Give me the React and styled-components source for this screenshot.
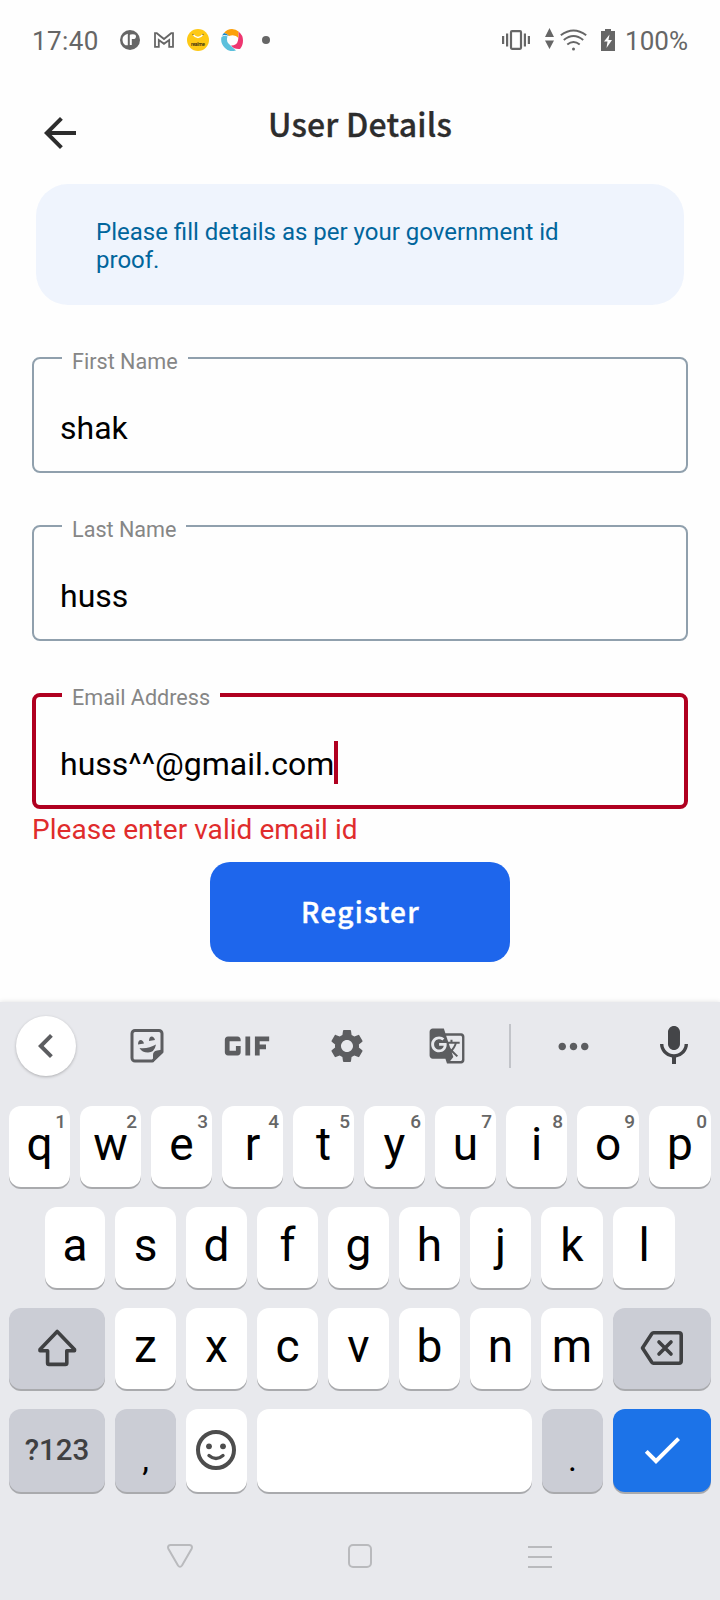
import React from 'react';
import styled, { createGlobalStyle } from 'styled-components';
import {
  MdArrowBack,
  MdCheck,
  MdChevronLeft,
  MdGif,
  MdGTranslate,
  MdMic,
  MdMoreHoriz,
  MdSettings,
} from 'react-icons/md';

const GlobalStyle = createGlobalStyle`
  *, *::before, *::after { box-sizing: border-box; }
  body { margin: 0; background: #fefefe; font-family: Roboto, 'Liberation Sans', sans-serif; }
  svg { display: block; flex: none; }
`;

const Screen = styled.div`
  display: flex;
  flex-direction: column;
  width: 720px;
  height: 1600px;
  overflow: hidden;
  background: #fefefe;
`;

/* ---------- status bar ---------- */

const StatusBar = styled.header`
  display: flex;
  flex: none;
  justify-content: space-between;
  height: 80px;
  padding: 0 32px;
  color: #666;
`;

const StatusGroup = styled.div`
  display: flex;
  align-items: center;
`;

const StatusText = styled.span`
  padding-top: 2px;
  margin-left: ${(p) => p.$gap || 0}px;
  font-size: 26px;
  line-height: 30px;
  letter-spacing: ${(p) => p.$spacing || 0}px;
`;

const StatusIcon = styled.svg`
  margin-left: ${(p) => p.$gap}px;
`;

/* ---------- title bar ---------- */

const TitleBar = styled.div`
  display: grid;
  flex: none;
  grid-template-columns: 120px 1fr 120px;
  height: 104px;
  color: #2d2d2d;
`;

const BackButton = styled.button`
  display: flex;
  justify-self: start;
  align-self: start;
  margin: 29px 0 0 36px;
  padding: 0;
  border: 0;
  background: none;
  color: inherit;
`;

const Title = styled.h1`
  margin: 19px 0 0;
  text-align: center;
  font-family: 'Noto Sans CJK JP', 'Noto Sans', sans-serif;
  font-size: 32px;
  font-weight: 500;
  line-height: 48px;
  letter-spacing: 0.2px;
  -webkit-text-stroke: 0.3px currentColor;
  white-space: nowrap;
`;

/* ---------- form ---------- */

const Form = styled.main`
  display: flex;
  flex: none;
  flex-direction: column;
  height: 818px;
`;

const Notice = styled.p`
  margin: 0 36px 52px;
  height: 121px;
  padding: 34px 100px 0 60px;
  border-radius: 32px;
  background: #eff4fd;
  color: #01659c;
  font-size: 24px;
  line-height: 28px;
`;

const Field = styled.div`
  position: relative;
  display: flex;
  align-items: center;
  height: 116px;
  margin: 0 32px ${(p) => (p.$error ? 0 : 52)}px;
  padding: 26px 0 0 ${(p) => (p.$error ? 24 : 26)}px;
  border: ${(p) => (p.$error ? '4px solid #b00020' : '2px solid #90a0ad')};
  border-radius: 8px;
`;

const FieldLabel = styled.label`
  position: absolute;
  left: ${(p) => (p.$error ? 26 : 28)}px;
  top: ${(p) => (p.$error ? -13 : -11)}px;
  padding: 0 10px;
  background: #fefefe;
  color: #868686;
  font-size: 21.6px;
  line-height: 28px;
  white-space: nowrap;
`;

const FieldValue = styled.span`
  color: #000;
  font-size: 32px;
  line-height: 40px;
`;

const Caret = styled.i`
  width: 4px;
  height: 43px;
  margin-top: -3px;
  background: #b00020;
`;

const ErrorText = styled.p`
  margin: 4px 32px 0;
  height: 49px;
  color: #e02c2c;
  font-size: 28px;
  line-height: 33px;
  letter-spacing: 0.05px;
`;

const RegisterButton = styled.button`
  align-self: center;
  flex: none;
  width: 300px;
  height: 100px;
  padding: 0 0 3px 1px;
  border: 0;
  border-radius: 20px;
  background: #1e66ec;
  color: #fff;
  font-family: 'Noto Sans CJK JP', 'Noto Sans', sans-serif;
  font-size: 28px;
  font-weight: 500;
  letter-spacing: 1.3px;
  -webkit-text-stroke: 0.4px currentColor;
`;

/* ---------- keyboard ---------- */

const Keyboard = styled.section`
  display: flex;
  flex-direction: column;
  flex: 1;
  background: #e8e9ed;
  box-shadow: 0 0 5px rgba(0, 0, 0, 0.12);
`;

const Toolbar = styled.div`
  display: flex;
  flex: none;
  align-items: center;
  height: 88px;
  margin-bottom: 16px;
  padding-left: 16px;
  color: #5c5d60;
`;

const CollapseButton = styled.div`
  display: flex;
  align-items: center;
  width: 60px;
  height: 60px;
  margin-right: 21px;
  padding-left: 6px;
  border-radius: 50%;
  background: #fff;
  box-shadow: 0 1px 3px rgba(0, 0, 0, 0.25);
`;

const Tool = styled.div`
  display: flex;
  flex: none;
  align-items: center;
  justify-content: center;
  width: ${(p) => p.$width || 100}px;
  margin-left: ${(p) => p.$gap || 0}px;
  color: ${(p) => p.$color || 'inherit'};
`;

const ToolDivider = styled.i`
  width: 2px;
  height: 44px;
  margin: 0 12px;
  background: #c2c4c9;
`;

const KeyRow = styled.div`
  display: flex;
  gap: 10px;
  padding-left: ${(p) => p.$indent || 9}px;
  margin-bottom: 20px;
`;

const keyColors = { letter: '#fff', modifier: '#cbcdd5', action: '#1c73e8' };

const Key = styled.div`
  position: relative;
  display: flex;
  flex: none;
  align-items: center;
  justify-content: center;
  width: ${(p) => p.$width || 61}px;
  height: ${(p) => p.$height || 81}px;
  padding-bottom: ${(p) => (p.$icon ? 1 : 5)}px;
  border-radius: 12px;
  background: ${(p) => keyColors[p.$kind || 'letter']};
  box-shadow: 0 2px 0 #a9aaad;
  color: ${(p) => (p.$kind === 'action' ? '#fff' : p.$icon ? '#3f4042' : '#000')};
  font-size: 46px;
  line-height: 54px;
`;

const KeyHint = styled.sup`
  position: absolute;
  top: 5px;
  right: 4px;
  color: #666;
  font-size: 19px;
  font-weight: 500;
  line-height: 22px;
`;

const SymbolsLabel = styled.span`
  padding-top: 4px;
  color: #3f4042;
  font-size: 29.5px;
  font-weight: 500;
`;

const Punctuation = styled.span`
  padding-top: 21px;
  font-size: 34px;
`;

const NavBar = styled.nav`
  display: flex;
  flex: none;
  justify-content: center;
  align-items: center;
  gap: 154px;
  height: 92px;
  margin-top: -2px;
`;

const StickerIcon = () => (
  <svg width="36" height="36" viewBox="0 0 36 36">
    <path d="M6 2.500h24a3 3 0 0 1 3 3V24l-9.500 9H6a3 3 0 0 1-3-3V5.500a3 3 0 0 1 3-3z" fill="none" stroke="currentColor" strokeWidth="3" strokeLinejoin="round" />
    <path d="M34 21.500L24 34.500v-7.500q0-4 4-4.500z" fill="currentColor" />
    <path d="M9 16.500c0-6 5-5.500 6-1zM20 13c0-6 5-5.500 6-1zM10.500 20q9 1 16.500-3.500-1.500 8-8 8-6 0-8.500-4.500z" fill="currentColor" />
  </svg>
);

const ShiftIcon = () => (
  <svg width="40" height="40" viewBox="0 0 40 40" fill="none" stroke="currentColor" strokeWidth="3.600" strokeLinejoin="round">
    <path d="M20.200 3.500L37.500 21.500V22.800H29.800V35Q29.800 36.400 28.400 36.400H12Q10.600 36.400 10.600 35V22.800H3V21.500z" />
  </svg>
);

const BackspaceIcon = () => (
  <svg width="44" height="36" viewBox="0 0 44 36" fill="none" stroke="currentColor" strokeWidth="3.600" strokeLinejoin="round" strokeLinecap="round">
    <path d="M13.500 2.800H39Q41.200 2.800 41.200 5V31Q41.200 33.200 39 33.200H13.500Q12.500 33.200 11.800 32.200L2.500 18 11.800 3.800Q12.500 2.800 13.500 2.800z" />
    <path d="M19 12l12 12M31 12l-12 12" />
  </svg>
);

const SmileyIcon = () => (
  <svg width="43" height="42" viewBox="1 0 43 42" fill="none" stroke="#4d4d4d" strokeWidth="4">
    <circle cx="22" cy="21" r="18" />
    <circle cx="15" cy="17.300" r="2.900" fill="#4d4d4d" stroke="none" />
    <circle cx="29" cy="17.300" r="2.900" fill="#4d4d4d" stroke="none" />
    <path d="M15 26.500q7 6 14 0" strokeWidth="3.400" strokeLinecap="round" />
  </svg>
);

const StatusIconsLeft = () => (
  <>
    <StatusIcon $gap={21} width="20" height="20" viewBox="0 0 20 20">
      <circle cx="10" cy="10" r="10" fill="#666" />
      <path d="M7.800 3.800v11.500H5.500Q2.500 13.500 2.500 9.500t5.300-5.700zM10.500 4.500q5.500-1 5.500 2 0 3-4.200 2.500v6H9.800V5z" fill="#fefefe" />
    </StatusIcon>
    <StatusIcon $gap={14} width="20" height="16" viewBox="0 0 20 16">
      <path d="M1 14.800V1.200h1.800l7.200 5.800 7.200-5.800H19v13.600h-3.800V8L10 11.800 4.800 8v6.800z" fill="none" stroke="#666" strokeWidth="1.800" />
    </StatusIcon>
    <StatusIcon $gap={13} width="22" height="22" viewBox="0 0 22 22">
      <circle cx="11" cy="11" r="11" fill="#fec915" />
      <path d="M6 5.500q5 6 10 0" fill="none" stroke="#fff" strokeWidth="1.300" />
      <circle cx="6" cy="5.500" r=".8" fill="#8b7420" />
      <circle cx="16" cy="5.500" r=".8" fill="#8b7420" />
      <text x="11" y="17" textAnchor="middle" textLength="14" fontSize="5" fontWeight="500" fontFamily="Roboto, sans-serif" fill="#2b2410">realme</text>
    </StatusIcon>
    <StatusIcon $gap={12} width="22" height="22" viewBox="0 0 22 22">
      <path d="M3 4Q6 0 11 0q4 0 6.500 2.500L17.500 9Q14 5 8 7 6 4.500 3 4z" fill="#fca00b" />
      <path d="M17.500 2.500Q22 6 22 11.500q0 5-3 8.500-6 .5-9-3.500 6 0 7-5 1-5 .5-9z" fill="#ee3670" />
      <path d="M.5 8Q4 6 6.500 7.500 5 12 7.500 14.500q3 3 7.500 7Q8 23.500 4 19-1 14 .5 8z" fill="#5cc0dc" />
      <path d="M1 6.500L3 4q3 .5 5 3Q4 5.500 1 6.500z" fill="#1687c9" />
      <circle cx="11.700" cy="11.200" r="4" fill="#fefefe" />
    </StatusIcon>
    <StatusIcon $gap={19} width="8" height="8" viewBox="0 0 8 8">
      <circle cx="4" cy="4" r="4" fill="#666" />
    </StatusIcon>
  </>
);

const StatusIconsRight = () => (
  <>
    <StatusIcon $gap={0} width="28" height="20" viewBox="0 0 28 20" fill="#666">
      <rect x="9" y="1.200" width="10" height="17.600" rx="1" fill="none" stroke="#666" strokeWidth="2.200" />
      <path d="M0 6h2.200v8H0zM4 3.500h2.200v13H4zM21.800 3.500H24v13h-2.200zM25.800 6H28v8h-2.200z" />
    </StatusIcon>
    <StatusIcon $gap={15} width="9" height="24" viewBox="0 0 9 24" fill="#666">
      <path d="M4.500 0L9 9H0zM0 12.500h9l-4.500 8.500z" />
    </StatusIcon>
    <StatusIcon $gap={6} width="27" height="22" viewBox="0 0 27 22" fill="none" stroke="#666" strokeWidth="2">
      <path d="M.8 6.200q12.700-9.500 25.400 0M3.800 11q9.700-8 19.400 0M7.300 15.500q6.200-5 12.400 0" />
      <circle cx="13.500" cy="20" r="1.500" fill="#666" stroke="none" />
    </StatusIcon>
    <StatusIcon $gap={14} width="14" height="22" viewBox="0 0 14 22">
      <path d="M4 0h6v2h4v20H0V2h4z" fill="#666" />
      <path d="M8.500 5.500L3 12.500h3.500L5.500 19l5.500-8H7.500z" fill="#fefefe" />
    </StatusIcon>
  </>
);

const TOP_ROW = 'qwertyuiop'.split('');
const HOME_ROW = 'asdfghjkl'.split('');
const BOTTOM_ROW = 'zxcvbnm'.split('');

export default function App() {
  return (
    <>
      <GlobalStyle />
      <Screen>
        <StatusBar>
          <StatusGroup>
            <StatusText $spacing={0.4}>17:40</StatusText>
            <StatusIconsLeft />
          </StatusGroup>
          <StatusGroup>
            <StatusIconsRight />
            <StatusText $gap={10}>100%</StatusText>
          </StatusGroup>
        </StatusBar>

        <TitleBar>
          <BackButton aria-label="Back"><MdArrowBack size={48} /></BackButton>
          <Title>User Details</Title>
        </TitleBar>

        <Form>
          <Notice>Please fill details as per your government id proof.</Notice>
          <Field>
            <FieldLabel>First Name</FieldLabel>
            <FieldValue>shak</FieldValue>
          </Field>
          <Field>
            <FieldLabel>Last Name</FieldLabel>
            <FieldValue>huss</FieldValue>
          </Field>
          <Field $error>
            <FieldLabel $error>Email Address</FieldLabel>
            <FieldValue>huss^^@gmail.com</FieldValue>
            <Caret />
          </Field>
          <ErrorText>Please enter valid email id</ErrorText>
          <RegisterButton>Register</RegisterButton>
        </Form>

        <Keyboard>
          <Toolbar>
            <CollapseButton><MdChevronLeft size={48} /></CollapseButton>
            <Tool><StickerIcon /></Tool>
            <Tool><MdGif size={76} /></Tool>
            <Tool><MdSettings size={40} /></Tool>
            <Tool><MdGTranslate size={38} /></Tool>
            <ToolDivider />
            <Tool><MdMoreHoriz size={45} /></Tool>
            <Tool $width={92} $gap={5} $color="#444548"><MdMic size={48} /></Tool>
          </Toolbar>

          <KeyRow>
            {TOP_ROW.map((letter, i) => (
              <Key key={letter} $width={i > 7 ? 62 : 61}>
                {letter}
                <KeyHint>{(i + 1) % 10}</KeyHint>
              </Key>
            ))}
          </KeyRow>
          <KeyRow $indent={45}>
            {HOME_ROW.map((letter, i) => (
              <Key key={letter} $width={i === 0 ? 60 : i > 6 ? 62 : 61}>{letter}</Key>
            ))}
          </KeyRow>
          <KeyRow>
            <Key $kind="modifier" $width={96} $icon><ShiftIcon /></Key>
            {BOTTOM_ROW.map((letter) => (
              <Key key={letter} $width={letter === 'm' ? 62 : 61}>{letter}</Key>
            ))}
            <Key $kind="modifier" $width={98} $icon><BackspaceIcon /></Key>
          </KeyRow>
          <KeyRow>
            <Key $kind="modifier" $width={96} $height={83}><SymbolsLabel>?123</SymbolsLabel></Key>
            <Key $kind="modifier" $height={83}><Punctuation>,</Punctuation></Key>
            <Key $height={83} $icon><SmileyIcon /></Key>
            <Key $width={275} $height={83} />
            <Key $kind="modifier" $height={83}><Punctuation>.</Punctuation></Key>
            <Key $kind="action" $width={98} $height={83} $icon><MdCheck size={48} /></Key>
          </KeyRow>

          <NavBar>
            <svg width="26" height="24" viewBox="0 0 26 24" fill="none" stroke="#b9babd" strokeWidth="2">
              <path d="M3.500 1h19q3.500.5 2 4L15 21.500q-2 2.500-4 0L1.500 5q-1.500-3.500 2-4z" />
            </svg>
            <svg width="26" height="24" viewBox="-1 0 26 24" fill="none" stroke="#b9babd" strokeWidth="2">
              <rect x="1" y="1" width="22" height="22" rx="4" />
            </svg>
            <svg width="26" height="24" viewBox="-1 0 26 24" stroke="#b9babd" strokeWidth="2">
              <path d="M0 3h24M0 13h24M0 23h24" />
            </svg>
          </NavBar>
        </Keyboard>
      </Screen>
    </>
  );
}
